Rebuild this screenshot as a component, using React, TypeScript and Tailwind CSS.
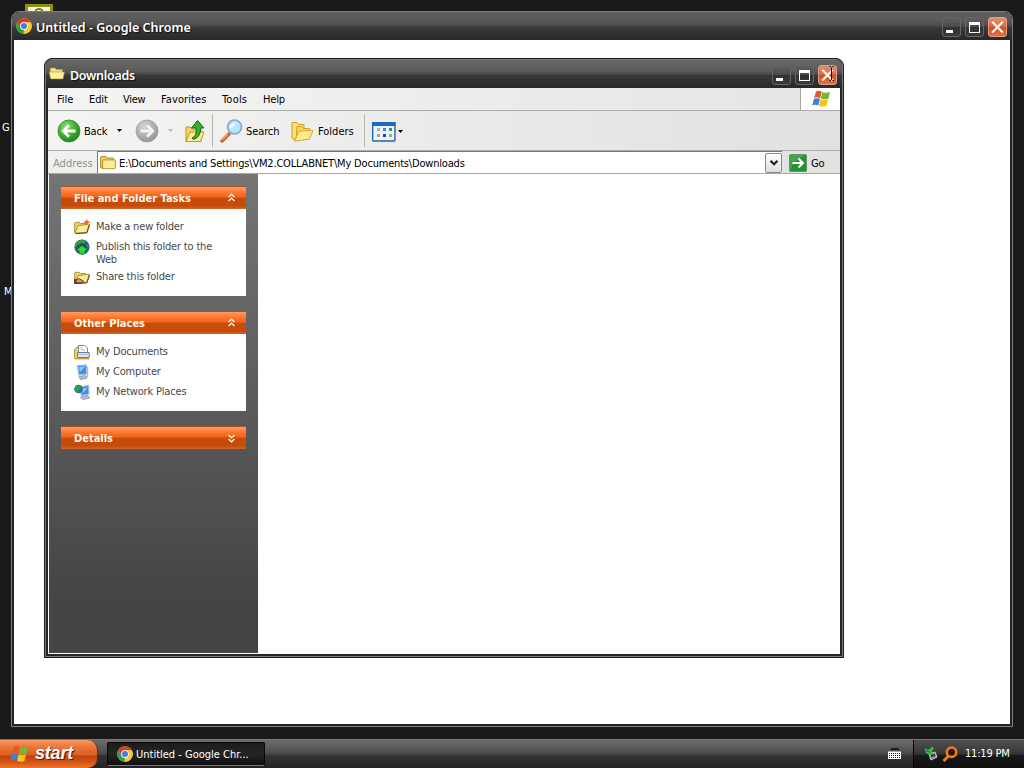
import type { ReactNode } from "react";

const ui = "font-['DejaVu_Sans_Condensed','DejaVu_Sans',sans-serif] [font-stretch:condensed]";

function ChromeIcon() {
  return (
    <svg className="h-4 w-4 shrink-0" viewBox="0 0 16 16">
      <circle cx="8" cy="8" r="7.8" fill="#f5c526" />
      <path d="M1.2 4.2A7.8 7.8 0 0 1 14.8 4.2L8 4.4 4.7 9.9Z" fill="#d93a2b" />
      <path d="M1.2 4.2 4.7 10 8 11.6 7.4 15.8A7.8 7.8 0 0 1 1.2 4.2Z" fill="#2f9e4a" />
      <path d="M7.4 15.8 11.3 9.6 11.2 6.3 10 4.3 14.8 4.3A7.8 7.8 0 0 1 7.4 15.8Z" fill="#f7c92c" />
      <circle cx="8" cy="8" r="3.9" fill="#f2f6fc" />
      <circle cx="8" cy="8" r="3" fill="#3f7fdc" />
    </svg>
  );
}

function WinFlag({ className }: { className: string }) {
  return (
    <svg className={className} viewBox="0 0 20 19">
      <path d="M4.2 1.6Q7 .2 10.3 1.6L8.6 8.6Q5.3 7 2.3 8.4Z" fill="#e9582c" />
      <path d="M10.8 2Q14.500 3.800 19 2.200L17.200 9.2Q13 10.500 9.200 8.900Z" fill="#76b82f" />
      <path d="M2 9.300Q5 8 8.400 9.300L6.600 16.300Q3.500 15 .3 16.300Z" fill="#3f7fd8" />
      <path d="M9 9.700Q13 11.400 17 9.900L15.200 17Q11.500 18.600 7.300 16.700Z" fill="#f7c320" />
    </svg>
  );
}

function Folder({ badge }: { badge: "new" | "share" }) {
  return (
    <svg className="h-4 w-4" viewBox="0 0 16 16">
      <path d="M.7 13.300V4.200Q.7 3.300 1.700 3.300H5L6.500 4.500H11.500V13.300Z" fill="#efcf63" stroke="#a98a2a" strokeWidth=".9" />
      <path d="M.9 14.200 4.200 6.600 15.300 5.200 12.700 13.400Z" fill="#fdeb9c" stroke="#a98a2a" strokeWidth=".9" />
      <path d="M1.500 14.600 12.900 13.900 15.500 6" fill="none" stroke="#3f3514" strokeWidth=".9" />
      {badge === "new" && <path d="M12.800 0 13.600 1.800 16 3.200 14 4.400 12.800 6.500 11.500 4.400 9.400 3.200 11.800 1.800Z" fill="#f0701c" />}
      {badge === "share" && (
        <g>
          <path d="M2 10.500 5 9.700 9.500 12 8.500 13.800 2 13.800Z" fill="#d99a66" stroke="#2e1d10" strokeWidth=".7" />
          <path d="M0 10H2.500V15H0Z" fill="#5b4a3a" />
        </g>
      )}
    </svg>
  );
}

function TitleFolder() {
  return (
    <svg className="h-4 w-4 shrink-0" viewBox="0 0 16 16">
      <path d="M1.200 12V3Q1.200 2 2.200 2H6L7.500 3.500H13.400V12Z" fill="#f2e185" stroke="#b79c2c" strokeWidth=".6" />
      <path d="M.3 6H15.400L14 12.900H1.800Z" fill="#fbf0a4" stroke="#b79c2c" strokeWidth=".6" />
    </svg>
  );
}

function YellowFolder() {
  return (
    <svg className="h-4 w-4 shrink-0" viewBox="0 0 16 16">
      <path d="M.6 12.500V3Q.6 1.500 2 1.500H6L7.500 3H12.600Q13.600 3 13.600 4V13H1.600Z" fill="#edcf5c" stroke="#a5841a" strokeWidth=".9" />
      <path d="M2.600 13.700V6Q2.600 4.900 3.700 4.900H14.200Q15.400 4.900 15.400 6V12.500Q15.400 13.700 14.200 13.700Z" fill="#fcec9a" stroke="#b08e20" strokeWidth=".9" />
    </svg>
  );
}

function CaptionButtons({ cursor }: { cursor?: boolean }) {
  const plain =
    "flex h-[20px] w-[19px] rounded-[3px] border border-[#666] bg-[linear-gradient(#5f5f5f,#4a4a4a_50%,#303030_52%,#3b3b3b)]";
  return (
    <div className="flex gap-[4px]">
      <div className={plain}>
        <div className="mt-[12px] ml-[3px] h-[3px] w-[7px] bg-white" />
      </div>
      <div className={plain}>
        <div className="mt-[4px] ml-[3px] h-[11px] w-[11px] border border-t-[3px] border-white" />
      </div>
      <div className="h-[20px] w-[19px] rounded-[3px] border border-[#e39a80] bg-[linear-gradient(#dd8f74,#d46c48_48%,#c85128_52%,#dc7348)]">
        <svg className="h-[18px] w-[17px]" viewBox="0 0 17 18">
          <path d="M4 4.500 13 13.700M13 4.500 4 13.700" stroke="#fff4ea" strokeWidth="2.200" strokeLinecap="square" />
          {cursor && <path d="M10.500 .5H12M13.500 .5H15M12.500 1.500V14M10.500 14.500H12M13.500 14.500H15" stroke="#16110e" strokeWidth="1" fill="none" />}
        </svg>
      </div>
    </div>
  );
}

function Caret({ light }: { light?: boolean }) {
  return (
    <svg className="h-[3px] w-[5px] shrink-0" viewBox="0 0 5 3">
      <path d="M0 0H5L2.500 3Z" fill={light ? "#b9b9b5" : "#000"} />
    </svg>
  );
}

function RoundArrow({ forward }: { forward?: boolean }) {
  const id = forward ? "fwd" : "bck";
  return (
    <svg className="h-6 w-6 shrink-0" viewBox="0 0 24 24">
      <defs>
        <radialGradient id={id} cx=".38" cy=".3" r=".75">
          <stop offset="0" stopColor={forward ? "#d5d5d5" : "#8fe070"} />
          <stop offset=".55" stopColor={forward ? "#b0b0b0" : "#3fae31"} />
          <stop offset="1" stopColor={forward ? "#929292" : "#18821a"} />
        </radialGradient>
      </defs>
      <circle cx="12" cy="12" r="11" fill={`url(#${id})`} stroke={forward ? "#9c9c9c" : "#2b8a25"} strokeWidth=".8" />
      <path
        d={forward ? "M5.500 12H17M12 6.300 17.700 12 12 17.700" : "M18.500 12H7M12 6.300 6.300 12 12 17.700"}
        fill="none"
        stroke={forward ? "#f3f3f3" : "#fff"}
        strokeWidth="2.800"
      />
    </svg>
  );
}

function Panel({ title, closed, children }: { title: string; closed?: boolean; children?: ReactNode }) {
  return (
    <section className="w-[185px]">
      <div className="flex h-[23px] items-center justify-between border-t border-[#a4532d] bg-[linear-gradient(#ff9d60,#ff7a31_22%,#ee641c_45%,#c94b08_52%,#c44c0b_85%,#d7641f)] pr-[9px] pl-[13px] text-[11px] font-bold text-[#fff6ea]">
        <span className="pt-[2px] whitespace-nowrap">{title}</span>
        <svg className={closed ? "h-[10px] w-[11px] rotate-180" : "h-[10px] w-[11px]"} viewBox="0 0 11 10">
          <path d="M2.500 4 5.500 1.200 8.500 4M2.500 8 5.500 5.200 8.500 8" fill="none" stroke="#fff3df" strokeWidth="1.300" />
        </svg>
      </div>
      {children}
    </section>
  );
}

function Task({ icon, children }: { icon: ReactNode; children: ReactNode }) {
  return (
    <div className="flex gap-[6px] pb-[7px] pl-[13px]">
      <div className="-mt-px -mb-[3px] h-4 w-4 shrink-0">{icon}</div>
      <div className="w-[140px] text-[11px] leading-[13px] tracking-[-0.18px] whitespace-nowrap text-[#484848]">{children}</div>
    </div>
  );
}

function Globe() {
  return (
    <svg className="h-4 w-4" viewBox="0 0 16 16">
      <circle cx="8" cy="8" r="7.600" fill="#245d90" />
      <path d="M2 3Q7-1 12 2L10 5 6 5 4 8 1 8ZM13 4 15 8 12 10Z" fill="#3a9a49" />
      <path d="M2 11.500 8 6.500 14 11.500H11V14.500Q8 16.500 5 14V11.500Z" fill="#34d83a" stroke="#0b741c" strokeWidth=".7" />
      <path d="M2 8.500 8 4.500 13.500 8.500" stroke="#163b35" fill="none" />
    </svg>
  );
}

function Docs() {
  return (
    <svg className="h-4 w-4" viewBox="0 0 16 16">
      <path d="M.7 14.500V5.500L3 3H9V14.500Z" fill="#f3d664" stroke="#a18425" strokeWidth=".9" />
      <path d="M4.500 11V1.500H10.500L13.500 4V11Z" fill="#fff" stroke="#5e789f" strokeWidth=".9" />
      <path d="M6.500 4H9M6.500 6H11" stroke="#8eabd6" strokeWidth=".8" />
      <path d="M3.500 8.500H15.200V13.500H3.500Z" fill="#d9e5f5" stroke="#5c708f" strokeWidth=".9" />
      <path d="M5 10.500H14" stroke="#9bb2d1" strokeWidth=".8" />
      <path d="M1 14.700H15" stroke="#c9a22c" strokeWidth="1.400" />
    </svg>
  );
}

function Monitor({ network }: { network?: boolean }) {
  return (
    <svg className="h-4 w-4" viewBox="0 0 16 16">
      <path d={network ? "M5 3 14.500 1.500 15 10 7.500 11.500Z" : "M3.500 1.500 12.500 1 12.500 10 4.800 11Z"} fill="#3c93e6" stroke="#a8bed8" strokeWidth="1.200" />
      <path d={network ? "M7.500 4.500 13.500 3.500 9 9Z" : "M5 3 11 2.500 6 8Z"} fill="#8ccbfa" />
      <path d={network ? "M6.500 13 14 11.500 15.500 14 9 15.600Z" : "M5 12.600 11.500 11.500 12.800 14.300 6.500 15.500Z"} fill="#b9bed3" stroke="#7c849f" strokeWidth=".7" />
      {!network && <path d="M12.600 2 14.200 3V13L12.800 14Z" fill="#b1bbcf" />}
      {network && (
        <g>
          <circle cx="4.500" cy="5" r="4.300" fill="#2a68b0" />
          <path d="M1 3Q4 0 7 2L7 5 5 6 4 9 1 7Z" fill="#2da142" />
        </g>
      )}
    </svg>
  );
}

function FileWindow() {
  return (
    <div className="absolute top-[58px] left-[44px] flex h-[600px] w-[800px] flex-col rounded-t-[8px] border border-[#1c1c1c] bg-[#282828]">
      <div className="flex min-h-0 flex-1 flex-col rounded-t-[7px] border border-[#7c7c7c] bg-[#262626] px-[2px] pb-[2px]">
        <div className="-mx-[2px] flex h-[28px] shrink-0 items-center rounded-t-[6px] bg-[linear-gradient(#686868,#5c5c5c_35%,#4e4e4e_50%,#393939_54%,#282828)] pr-[5px] pl-[3px]">
          <TitleFolder />
          <span className="ml-[5px] flex-1 pt-[4px] font-['Noto_Sans',sans-serif] text-[12.500px] font-semibold tracking-[-0.3px] text-white [text-shadow:1px_1px_1px_#111]">
            Downloads
          </span>
          <div className="pt-px"><CaptionButtons cursor /></div>
        </div>
        <div className="flex h-[22px] shrink-0 bg-[linear-gradient(90deg,#f4f4f2,#e5e5e3)] pl-[9px] text-[11px] leading-[24px] text-black">
          <span className="w-[32px] tracking-[-0.05px]">File</span>
          <span className="w-[34px] tracking-[-0.1px]">Edit</span>
          <span className="w-[38px] tracking-[-0.3px]">View</span>
          <span className="w-[61px] tracking-[0.1px]">Favorites</span>
          <span className="w-[41px] tracking-[0.2px]">Tools</span>
          <span className="flex-1 tracking-[-0.2px]">Help</span>
          <div className="flex w-[40px] items-center justify-center border-l border-[#a6a6a4] bg-white pl-px">
            <WinFlag className="h-[18px] w-[19px]" />
          </div>
        </div>
        <div className="flex h-[41px] shrink-0 items-center border-y border-t-[#acacaa] border-b-[#acacaa] bg-[linear-gradient(90deg,#f4f4f2,#e1e1df)] pl-[9px] text-[11px] text-black">
          <RoundArrow />
          <span className="ml-[3px] w-[33px] pt-[3px] tracking-[-0.2px]">Back</span>
          <Caret />
          <div className="ml-[13px]"><RoundArrow forward /></div>
          <div className="ml-[9px] flex w-[17px]"><Caret light /></div>
          <svg className="h-6 w-[22px] shrink-0" viewBox="0 0 22 24">
            <path d="M1 22.500V8H5L7 10H16V22.500Z" fill="#f5d365" stroke="#c49723" />
            <path d="M1 22.500 5 13H19L15.500 22.500Z" fill="#ffeb91" stroke="#c49723" />
            <path d="M7 19Q12 17.500 11 9H6.500L12.500 1.500 19 9H15.500Q16 18 8.500 20.500Z" fill="#38ae2a" stroke="#187219" />
          </svg>
          <div className="ml-[5px] h-[33px] w-px bg-[#b6b6b3]" />
          <svg className="ml-[6px] h-[25px] w-[25px] shrink-0" viewBox="0 0 25 25">
            <path d="M10 16 3 23" stroke="#bc693c" strokeWidth="3.500" strokeLinecap="round" />
            <path d="M9 16 3 22" stroke="#eba673" strokeWidth="1.500" />
            <circle cx="15.500" cy="9" r="7" fill="#b4e7fa" stroke="#8ca8cf" strokeWidth="1.700" />
            <path d="M11 9Q12 5 16 4.500Q18 7 11 11Z" fill="#eafaff" />
          </svg>
          <span className="ml-[2px] w-[45px] pt-[3px] tracking-[-0.1px]">Search</span>
          <svg className="mt-px h-[22px] w-6 shrink-0" viewBox="0 0 24 22">
            <path d="M1 18V2.500H6L8 4.500H13V16L3 20Z" fill="#f9df75" stroke="#d19f28" />
            <path d="M5 20 6 6.500H11L12.500 8.500H18.500V19Z" fill="#f7d75e" stroke="#d19f28" />
            <path d="M3.500 21.200 8 11 22 10.500 18.500 19Z" fill="#ffec91" stroke="#d6a62e" />
          </svg>
          <span className="ml-[3px] w-[46px] pt-[3px]">Folders</span>
          <div className="h-[33px] w-px bg-[#b6b6b3]" />
          <svg className="mt-[2px] ml-[7px] h-[20px] w-[24px] shrink-0" viewBox="0 0 24 20">
            <rect x=".7" y=".7" width="22.300" height="18.300" rx="1" fill="#e8f4ff" stroke="#2167ad" strokeWidth="1.400" />
            <path d="M0 0H23.500V4H0Z" fill="#1d68c5" />
            <path d="M5 6H8V9H5Z" fill="#c1a5b2" />
            <path d="M11 6H14V9H11Z" fill="#4c89b4" />
            <path d="M17 6H20V9H17Z" fill="#339750" />
            <path d="M5 12H8V15H5Z" fill="#d99754" />
            <path d="M11 12H14V15H11Z" fill="#1648ad" />
            <path d="M17 12H20V15H17Z" fill="#c5a348" />
          </svg>
          <div className="mt-[2px] ml-[2px]"><Caret /></div>
        </div>
        <div className="flex h-[23px] shrink-0 items-center border-b border-[#a6a6a4] bg-[linear-gradient(90deg,#f0f0ee,#e2e2e0)] pl-[5px] text-[11px]">
          <span className="w-[44px] pt-[4px] tracking-[0.05px] text-[#91918f]">Address</span>
          <div className="flex h-full w-[685px] items-center border-t border-l border-[#777] bg-white pt-px pl-[2px]">
            <YellowFolder />
            <span className="ml-[3px] flex-1 pt-[3px] tracking-[-0.185px] whitespace-nowrap text-black">
              E:\Documents and Settings\VM2.COLLABNET\My Documents\Downloads
            </span>
            <div className="flex h-[20px] w-[17px] items-center justify-center rounded-[2px] border border-[#898987] bg-[linear-gradient(#fff,#dededc)]">
              <svg className="h-[8px] w-[10px]" viewBox="0 0 10 8">
                <path d="M1.500 1.800 5 5.300 8.500 1.800" fill="none" stroke="#222" strokeWidth="2.200" />
              </svg>
            </div>
          </div>
          <svg className="mt-px ml-[7px] h-[18px] w-[18px] shrink-0" viewBox="0 0 18 18">
            <rect x=".4" y=".4" width="17.200" height="17.200" rx="1.500" fill="#259135" stroke="#568b50" strokeWidth=".8" />
            <path d="M1 17V1H17Q5 5 1 17Z" fill="#5eb668" opacity=".55" />
            <path d="M3.500 9H14M9.500 4.500 14 9 9.500 13.500" fill="none" stroke="#fff" strokeWidth="2" />
          </svg>
          <span className="ml-[4px] pt-[4px] tracking-[-0.2px] text-black">Go</span>
        </div>
        <div className="flex min-h-0 flex-1 bg-white pb-px pl-px">
          <aside className="flex w-[209px] flex-col gap-[15px] bg-[linear-gradient(#757575,#444444_90%)] pt-[12px] pl-[12px]">
            <Panel title="File and Folder Tasks">
              <div className="h-[87px] bg-white pt-[11px]">
                <Task icon={<Folder badge="new" />}>Make a new folder</Task>
                <Task icon={<Globe />}>
                  Publish this folder to the
                  <br />
                  Web
                </Task>
                <div className="-mt-[3px]">
                  <Task icon={<Folder badge="share" />}>Share this folder</Task>
                </div>
              </div>
            </Panel>
            <Panel title="Other Places">
              <div className="h-[77px] bg-white pt-[11px]">
                <Task icon={<Docs />}>My Documents</Task>
                <Task icon={<Monitor />}>My Computer</Task>
                <Task icon={<Monitor network />}>My Network Places</Task>
              </div>
            </Panel>
            <Panel title="Details" closed />
          </aside>
        </div>
      </div>
    </div>
  );
}

export default function App() {
  return (
    <div className={`${ui} relative flex h-[768px] w-[1024px] flex-col justify-end overflow-hidden bg-[#1a1a1a]`}>
      <div className="absolute top-[4px] left-[25px] h-[12px] w-[28px] border-[3px] border-[#8d8f16] bg-[#f6f6df]">
        <div className="mx-auto mt-px h-[5px] w-[10px] rounded-t-full border-2 border-[#777b21]" />
      </div>
      <span className="absolute top-[120px] left-[2px] text-[11px] text-white">G</span>
      <span className="absolute top-[284px] left-[4px] text-[11px] text-white">M</span>

      <div className="absolute top-[11px] left-[11px] flex h-[716px] w-[1002px] flex-col rounded-t-[8px] border border-[#7e7e7e] bg-[#222] px-[2px] pb-[2px]">
        <div className="-mx-[2px] flex h-[28px] shrink-0 items-center rounded-t-[7px] bg-[linear-gradient(#606060,#575757_35%,#4a4a4a_50%,#393939_54%,#292929)] pr-[5px] pl-[4px]">
          <ChromeIcon />
          <span className="ml-[4px] flex-1 pt-[4px] font-['Noto_Sans',sans-serif] text-[12.500px] font-semibold text-white [text-shadow:1px_1px_1px_#111]">
            Untitled - Google Chrome
          </span>
          <div className="pt-px"><CaptionButtons /></div>
        </div>
        <div className="flex-1 bg-white" />
      </div>

      <FileWindow />

      <footer className="flex h-[29px] items-stretch border-t border-[#777] bg-[linear-gradient(#6c6c6c,#565656_35%,#484848_50%,#343434_56%,#222)]">
        <div className="flex w-[98px] items-center rounded-r-[10px] border-r border-[#722c0b] bg-[linear-gradient(#f59a68,#ed7539_25%,#dc5e22_52%,#bd4309_58%,#d75816_80%,#ed742d)] pl-[10px]">
          <WinFlag className="h-[18px] w-[19px]" />
          <span className="-mt-[2px] ml-[6px] font-['Liberation_Sans',sans-serif] text-[18px] leading-[24px] font-bold tracking-[-0.2px] text-white italic [text-shadow:1px_1px_1px_#3c1702]">
            start
          </span>
        </div>
        <div className="mt-[2px] ml-[9px] flex h-[24px] w-[158px] items-center rounded-[2px] border border-[#080808] border-b-[#777] bg-[linear-gradient(#1c1c1c,#242424_50%,#101010)] pl-[9px] text-[11px] text-white">
          <ChromeIcon />
          <span className="ml-[3px] pt-[2px] whitespace-nowrap">Untitled - Google Chr...</span>
        </div>
        <div className="flex flex-1 items-center justify-end pr-[12px]">
          <svg className="-mt-px h-[13px] w-[13px]" viewBox="0 0 13 13">
            <path d="M3 1.500 4.500 2.500 6 1.500 7.500 2.500 9 1.500 11 3" fill="none" stroke="#080808" strokeWidth="1.200" />
            <path d="M0 4.500H13V12H0Z" fill="#fff" />
            <path d="M1 6.500H12M1 8.500H12" stroke="#111" strokeWidth="1" strokeDasharray="1 1" />
            <path d="M1 10.500H12" stroke="#222" strokeWidth="1" strokeDasharray="1 1" />
          </svg>
        </div>
        <div className="flex w-[111px] items-center border-l border-black bg-[linear-gradient(#505050,#3e3e3e_35%,#343434_50%,#181818_56%,#101010)] pl-[10px] text-[11px] text-white">
          <svg className="-mt-px h-4 w-[15px]" viewBox="0 0 15 16">
            <path d="M5 8 11 6 13 11 7 14Z" fill="#858f97" stroke="#c1c9ce" />
            <path d="M7 10 11 9" stroke="#23352e" strokeWidth="2" />
            <path d="M1 2 4 4 8 1 10 2 8 5 9 8 5 9 1 6Z" fill="#37bd3d" />
            <path d="M1 5 6 6" stroke="#1d7130" />
          </svg>
          <svg className="-mt-px ml-[3px] h-4 w-4" viewBox="0 0 16 16">
            <circle cx="9.500" cy="6.200" r="4.700" fill="#271409" stroke="#ef7b21" strokeWidth="2.600" />
            <path d="M6.500 10 1.500 15" stroke="#ef7b21" strokeWidth="3" />
          </svg>
          <span className="ml-[7px] tracking-[-0.2px] whitespace-nowrap">11:19 PM</span>
        </div>
      </footer>
    </div>
  );
}
